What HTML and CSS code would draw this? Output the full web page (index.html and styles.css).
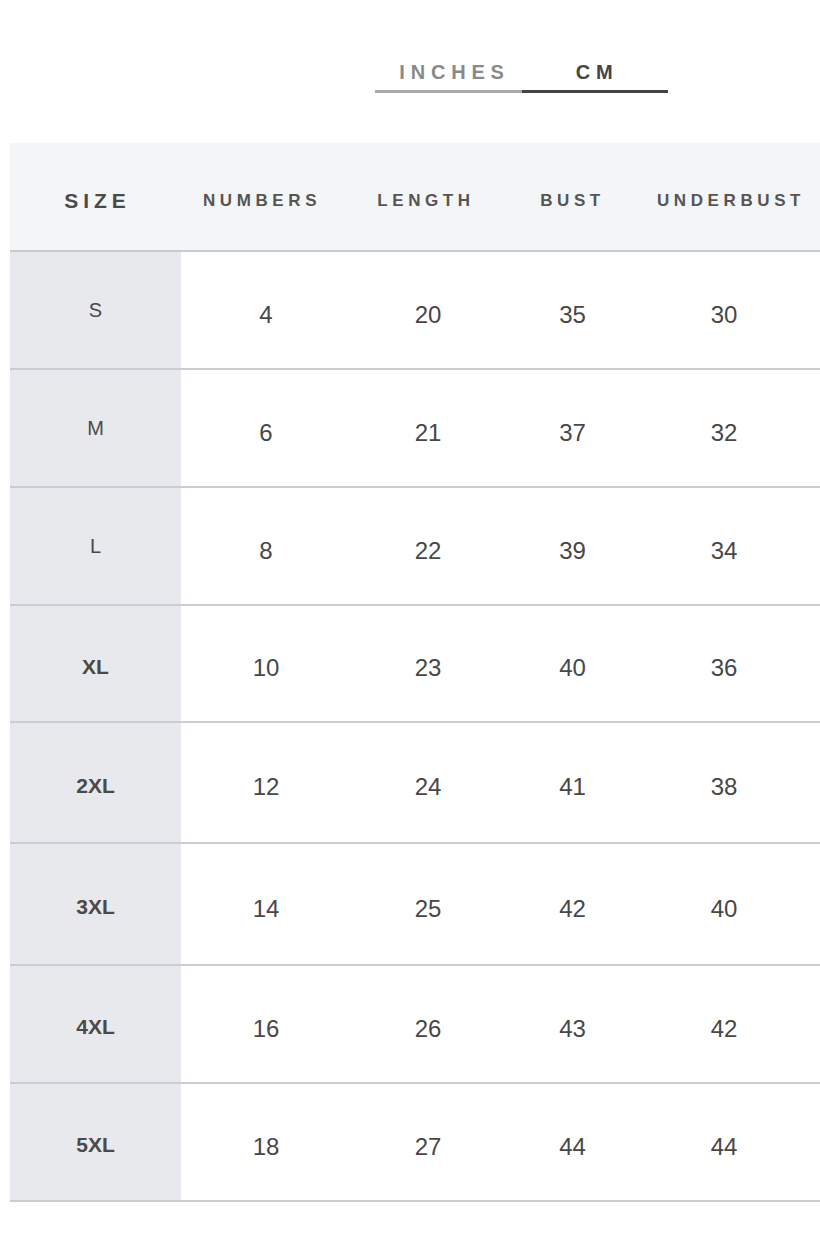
FILE: index.html
```html
<!DOCTYPE html>
<html>
<head>
<meta charset="utf-8">
<link rel="stylesheet" href="styles.css">
</head>
<body>
<div class="page">
  <div class="tabs">
    <div class="tab tab-off">INCHES</div>
    <div class="tab tab-on">CM</div>
  </div>
  <div class="chart">
    <div class="row head">
      <div class="cell c-size">SIZE</div>
      <div class="cell">NUMBERS</div>
      <div class="cell">LENGTH</div>
      <div class="cell">BUST</div>
      <div class="cell">UNDERBUST</div>
    </div>
    <div class="row"><div class="cell c-size">S</div><div class="cell">4</div><div class="cell">20</div><div class="cell">35</div><div class="cell">30</div></div>
    <div class="row"><div class="cell c-size">M</div><div class="cell">6</div><div class="cell">21</div><div class="cell">37</div><div class="cell">32</div></div>
    <div class="row"><div class="cell c-size">L</div><div class="cell">8</div><div class="cell">22</div><div class="cell">39</div><div class="cell">34</div></div>
    <div class="row"><div class="cell c-size b">XL</div><div class="cell">10</div><div class="cell">23</div><div class="cell">40</div><div class="cell">36</div></div>
    <div class="row"><div class="cell c-size b">2XL</div><div class="cell">12</div><div class="cell">24</div><div class="cell">41</div><div class="cell">38</div></div>
    <div class="row"><div class="cell c-size b">3XL</div><div class="cell">14</div><div class="cell">25</div><div class="cell">42</div><div class="cell">40</div></div>
    <div class="row"><div class="cell c-size b">4XL</div><div class="cell">16</div><div class="cell">26</div><div class="cell">43</div><div class="cell">42</div></div>
    <div class="row"><div class="cell c-size b">5XL</div><div class="cell">18</div><div class="cell">27</div><div class="cell">44</div><div class="cell">44</div></div>
  </div>
</div>
</body>
</html>
```
FILE: styles.css
```css
* { box-sizing: border-box; }
html, body { margin: 0; padding: 0; background: #ffffff; }
body { font-family: "Liberation Sans", Arial, sans-serif; color: #444; width: 820px; height: 1246px; overflow: hidden; }
.page { padding-top: 56px; }
.tabs { display: flex; margin-left: 375px; width: 293px; }
.tab { height: 37px; font-size: 20px; font-weight: bold; letter-spacing: 5.8px; display: flex; justify-content: center; align-items: flex-start; padding-top: 5px; }
.tab-off { width: 147px; color: #8a8a8a; border-bottom: 3px solid #aaaaaa; padding-left: 12px; }
.tab-on { width: 146px; color: #454545; border-bottom: 3px solid #444444; padding-left: 4px; }
.chart { margin-top: 50px; margin-left: 10px; width: 810px; }
.row { display: grid; grid-template-columns: 171px 170px 154px 135px 180px; height: 118px; border-bottom: 2px solid #c9cdd4; }
.row:nth-child(5) { height: 117px; }
.row:nth-child(6) { height: 121px; }
.row:nth-child(7) { height: 122px; }
.row.head { height: 109px; background: #f3f5f7; border-bottom: 2px solid #c6cbd4; }
.cell { display: flex; align-items: center; justify-content: center; font-size: 24px; color: #474747; padding-top: 9px; }
.cell:nth-child(5) { padding-right: 12px; }
.cell.c-size { background: #e8e9ec; font-size: 20px; padding-top: 0; color: #4a4a4a; }
.cell.b { font-weight: bold; font-size: 21px; padding-top: 6px; }
.head .cell { font-size: 17px; font-weight: bold; letter-spacing: 4.6px; color: #555; padding-top: 8px; }
.head .cell:nth-child(2) { padding-right: 8px; }
.head .cell:nth-child(3) { padding-right: 4px; }
.head .cell:nth-child(4) { padding-right: 0; }
.head .cell:nth-child(5) { padding-right: 0; padding-left: 2px; }
.head .cell.c-size { background: transparent; font-size: 21px; letter-spacing: 5px; color: #4a4a4a; padding-left: 4px; padding-top: 8px; }
```
